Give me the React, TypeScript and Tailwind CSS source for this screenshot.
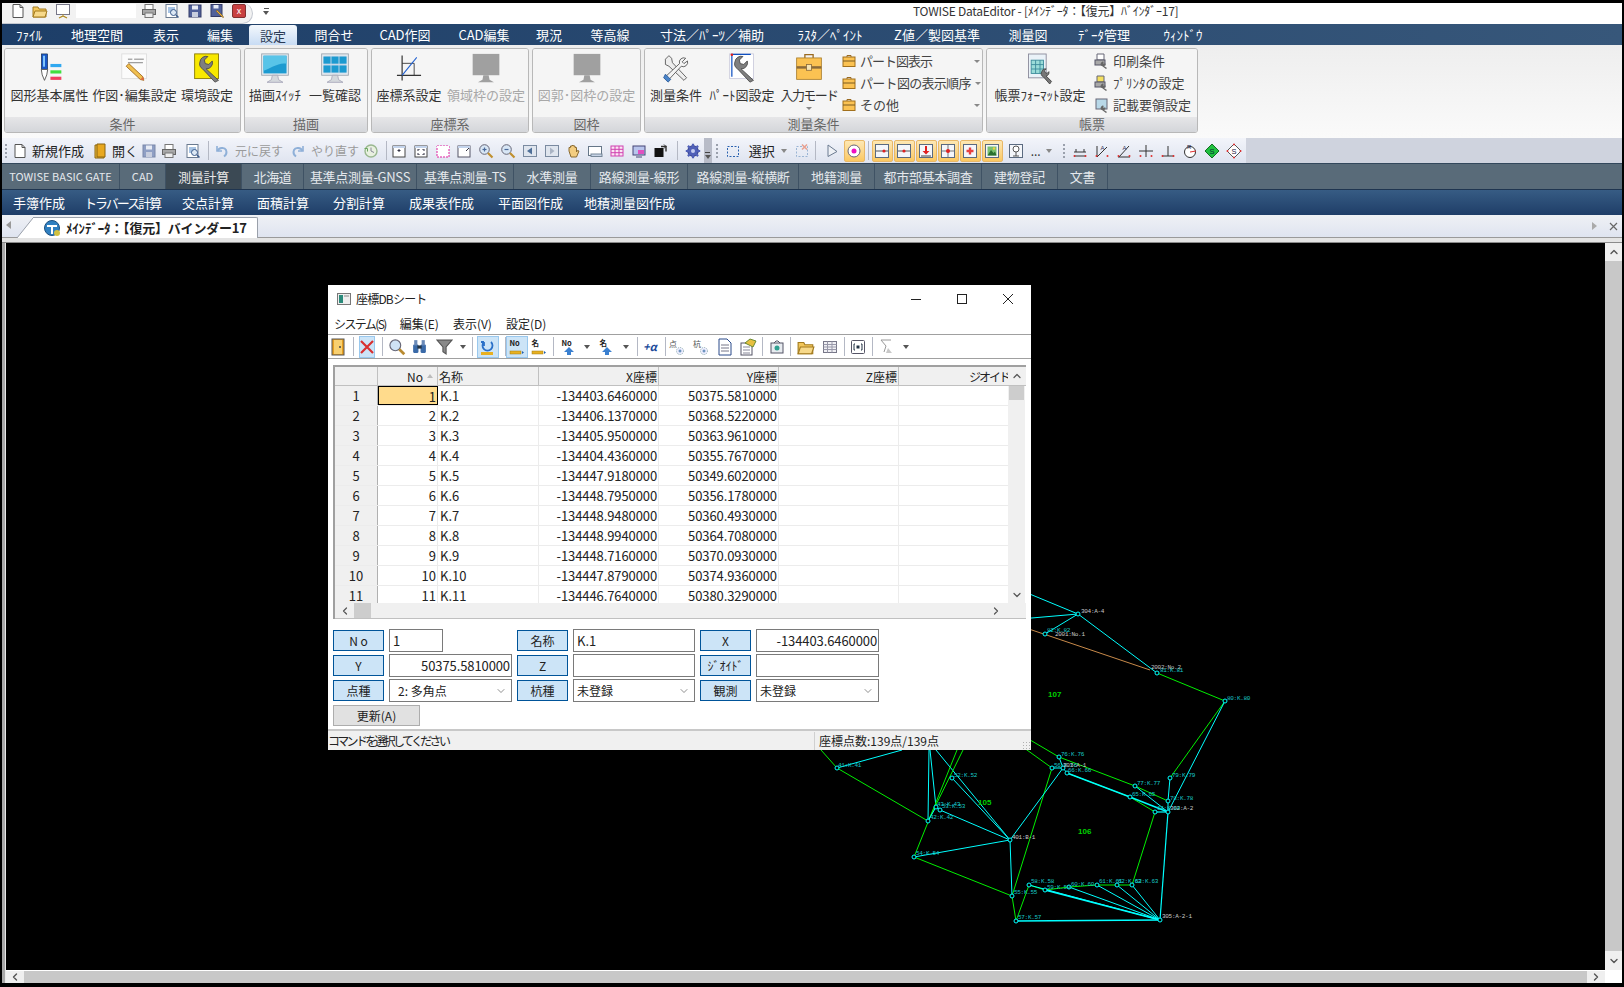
import React from "react";
import { ChevronDown, ChevronLeft, ChevronRight, ChevronUp } from "lucide-react";

const FONT = "font-['Noto_Sans_CJK_JP','Liberation_Sans',sans-serif]";

const Svg: React.FC<{ s?: number; children: React.ReactNode }> = ({ s = 16, children }) => (
  <svg width={s} height={s} viewBox="0 0 16 16" fill="none" className="shrink-0">
    {children}
  </svg>
);

const Sep = ({ c = "ml-[4px]" }: { c?: string }) => <div className={`w-px h-[19px] bg-[#b4b8c4] shrink-0 ${c}`} />;

const Tri = ({ c = "" }: { c?: string }) => (
  <div className={`w-0 h-0 border-x-[3px] border-x-transparent border-t-[4px] border-t-[#555] shrink-0 ${c}`} />
);

// ---- small tool icons ----
const IcPage = () => (
  <Svg>
    <path d="M3 1.5h7l3 3v10H3z" fill="#fff" stroke="#555" />
    <path d="M10 1.5v3h3" stroke="#555" />
  </Svg>
);
const IcOpenBook = () => (
  <Svg>
    <path d="M3 2h9v13H3z" fill="#f0c040" stroke="#8a6510" />
    <path d="M5 1h8v13H5z" fill="#e8a820" stroke="#8a6510" />
  </Svg>
);
const IcFolder = () => (
  <Svg>
    <path d="M1 4h5l1 2h7v8H1z" fill="#f2c65a" stroke="#a37b1f" />
    <path d="M1 14l2-6h12l-2 6z" fill="#f7d98a" stroke="#a37b1f" />
  </Svg>
);
const IcSave = ({ dim = false }: { dim?: boolean }) => (
  <Svg>
    <rect x="2" y="2" width="12" height="12" fill={dim ? "#8f9fc4" : "#50609a"} stroke={dim ? "#7a88aa" : "#333a66"} />
    <rect x="5" y="2.5" width="6" height="4" fill="#e8ecf5" />
    <rect x="5" y="9" width="6" height="5" fill="#c8cede" />
  </Svg>
);
const IcPrint = () => (
  <Svg>
    <rect x="4" y="1.5" width="8" height="5" fill="#fff" stroke="#777" />
    <rect x="1.5" y="6.5" width="13" height="5" fill="#a8a8a8" stroke="#666" />
    <rect x="4" y="10" width="8" height="4.5" fill="#eee" stroke="#777" />
  </Svg>
);
const IcPreview = () => (
  <Svg>
    <rect x="2" y="1.5" width="11" height="13" fill="#fff" stroke="#6a7a90" />
    <rect x="4" y="4" width="7" height="6" fill="#a8c4e4" />
    <circle cx="9.5" cy="9.5" r="3" fill="#dce8f5" stroke="#3a5a8a" />
    <path d="M12 12l2.5 2.5" stroke="#3a5a8a" strokeWidth="1.5" />
  </Svg>
);
const IcSaveEdit = () => (
  <Svg>
    <rect x="2" y="1.5" width="11" height="12" fill="#50609a" stroke="#333a66" />
    <rect x="4.500" y="2" width="5" height="3.500" fill="#e8ecf5" />
    <path d="M7 8l6 6 1.500.5-.5-1.500-6-6z" fill="#e8b040" stroke="#7a5a20" strokeWidth="0.600" />
  </Svg>
);
const IcUndo = ({ flip = false }: { flip?: boolean }) => (
  <Svg>
    <g transform={flip ? "translate(16 0) scale(-1 1)" : undefined}>
      <path d="M3 3v5h5" stroke="#8fb0d8" strokeWidth="1.6" />
      <path d="M3.5 8C5 4.5 10.500 4 12 7c1 2.500 0 5-2 6.500" stroke="#8fb0d8" strokeWidth="2" />
    </g>
  </Svg>
);
const IcClock = () => (
  <Svg>
    <circle cx="8" cy="8" r="6" fill="#e8f0e0" stroke="#9ab890" strokeWidth="1.4" />
    <path d="M8 4.500V8l3 1.500" stroke="#889" />
    <path d="M1.500 5.500h3v3" stroke="#6aa860" />
  </Svg>
);
const IcFrame = ({ c = "#444", dash = false, mark = "" }: { c?: string; dash?: boolean; mark?: string }) => (
  <Svg>
    <rect x="2" y="3" width="12" height="11" fill="#fff" stroke={c} strokeDasharray={dash ? "2 1" : undefined} />
    <rect x="2" y="3" width="12" height="2" fill={dash ? "#fff" : "#c4d4ec"} />
    {mark && <path d={mark} stroke="#334" />}
  </Svg>
);
const IcZoom = ({ minus = false }: { minus?: boolean }) => (
  <Svg>
    <circle cx="6.500" cy="6.500" r="4.800" fill="#d8e6f5" stroke="#667" />
    <path d="M4.500 6.500h4" stroke="#4a6a9a" strokeWidth="1.2" />
    {!minus && <path d="M6.500 4.500v4" stroke="#4a6a9a" strokeWidth="1.2" />}
    <path d="M10 10l4.500 4.500" stroke="#c09030" strokeWidth="2.200" />
  </Svg>
);
const IcArrowBox = ({ right = false }: { right?: boolean }) => (
  <Svg>
    <rect x="1.500" y="2.500" width="13" height="11" fill="#dfe5ee" stroke="#7a8aa0" />
    <path d={right ? "M10.500 8L6 4.500v7z" : "M5 8l5-3.500v7z"} fill={right ? "#aab4c4" : "#4f6f98"} />
  </Svg>
);
const IcHand = () => (
  <Svg>
    <path d="M4 8V4.500h1.500V3H7v-.500h1.500V3H10v1.500h1.500V9l1-1.500L14 8l-2.500 6H6z" fill="#f3cd80" stroke="#8a6a30" />
  </Svg>
);
const IcWin = () => (
  <Svg>
    <rect x="1.500" y="3.500" width="13" height="9" fill="#fff" stroke="#678" />
    <rect x="4" y="11" width="11" height="2.500" fill="#c8d4e6" stroke="#789" />
  </Svg>
);
const IcStand = () => (
  <Svg>
    <rect x="1.500" y="1.500" width="13" height="10" fill="#fff" stroke="#778" />
    <path d="M8 11.500v1.500M4 15l4-2 4 2" stroke="#b08a20" strokeWidth="1.200" />
  </Svg>
);
const IcGridPink = () => (
  <Svg>
    <rect x="2" y="3" width="12" height="10" fill="#fbe6f4" stroke="#d040b0" />
    <path d="M2 6.300h12M2 9.700h12M6 3v10M10 3v10" stroke="#d040b0" />
  </Svg>
);
const IcScreen = () => (
  <Svg>
    <rect x="2" y="3" width="12" height="9" fill="#b8c4ec" stroke="#447" />
    <rect x="7" y="7" width="6" height="4" fill="#e050c0" />
    <path d="M5 14h6" stroke="#447" />
  </Svg>
);
const IcFront = () => (
  <Svg>
    <rect x="1.500" y="5" width="9" height="9" fill="#111" />
    <path d="M8 3.500h5v5" stroke="#333" strokeWidth="1.400" />
    <path d="M11 1.500l2 2-2 2" stroke="#333" />
  </Svg>
);
const IcGear = () => (
  <Svg>
    <circle cx="8" cy="8" r="5.300" fill="#5060b8" stroke="#343f88" />
    <path d="M8 .800v14.400M.800 8h14.400M2.900 2.900l10.200 10.200M13.100 2.900L2.900 13.100" stroke="#5060b8" strokeWidth="2.200" />
    <circle cx="8" cy="8" r="2" fill="#c4ccf0" />
  </Svg>
);
const IcDots = () => (
  <div className="flex flex-col gap-[2px] w-[2px] shrink-0">
    <div className="h-[2px] bg-[#9aa0ac]" />
    <div className="h-[2px] bg-[#9aa0ac]" />
    <div className="h-[2px] bg-[#9aa0ac]" />
    <div className="h-[2px] bg-[#9aa0ac]" />
  </div>
);
const IcSelRect = ({ x = false }: { x?: boolean }) => (
  <Svg>
    <rect x="2.500" y="3.500" width="11" height="10" stroke={x ? "#9ab4d4" : "#2a62b0"} strokeDasharray="2 1.500" />
    {x && <path d="M8 1.500l5 5M13 1.500l-5 5" stroke="#e8a090" strokeWidth="1.500" />}
  </Svg>
);
const IcPointer = () => (
  <Svg>
    <path d="M4 2l9 6.500-9 5z" fill="#eef1f6" stroke="#6a7a90" />
  </Svg>
);
const PtIcon = ({ kind }: { kind: string }) => (
  <Svg>
    <rect x="1.500" y="1.500" width="13" height="13" fill="#f4f6fa" stroke="#5a6a80" />
    {kind === "a" && <><path d="M2 8h12" stroke="#555" /><circle cx="10" cy="8" r="1.600" fill="#e02020" /></>}
    {kind === "b" && <><path d="M2 8h12" stroke="#555" /><circle cx="8" cy="8" r="1.600" fill="#e02020" /></>}
    {kind === "c" && <><path d="M8 3v7" stroke="#e02020" strokeWidth="2" /><path d="M4.500 8L8 11.500 11.500 8z" fill="#e02020" /><path d="M3 13h10" stroke="#444" /></>}
    {kind === "d" && <><path d="M8 2v12M2 8h12" stroke="#777" /><circle cx="8" cy="8" r="2" fill="#e02020" /></>}
    {kind === "e" && <path d="M8 4.500v7M4.500 8h7" stroke="#e84040" strokeWidth="2.400" />}
    {kind === "f" && <><rect x="3.500" y="3.500" width="9" height="9" fill="#7ac070" /><path d="M3.500 12.500L7 7l2.500 3 1.500-1.500 1.500 4z" fill="#2a7030" /><circle cx="10" cy="5.500" r="1.200" fill="#f0d040" /></>}
    {kind === "g" && <><circle cx="8" cy="6" r="3" fill="#fff" stroke="#555" /><path d="M8 9v4M5 13h6" stroke="#555" /></>}
  </Svg>
);
const DimIcon = ({ d, label }: { d: string; label?: string }) => (
  <Svg>
    <path d={d} stroke="#333" />
    {label && <text x="6.500" y="6.500" fontSize="6" fill="#335" fontFamily="Liberation Sans">{label}</text>}
    <circle cx="2.500" cy="13" r="1" fill="#e03030" />
    <circle cx="13.500" cy="13" r="1" fill="#e03030" />
  </Svg>
);
const IcDiamond = ({ green = false }: { green?: boolean }) => (
  <Svg>
    <path d="M8 1l7 7-7 7-7-7z" fill={green ? "#20c040" : "#fff"} stroke={green ? "#107020" : "#555"} />
    <text x="5.500" y="10.500" fontSize="7.500" fill={green ? "#033" : "#224"} fontFamily="Liberation Sans">S</text>
    {!green && <><circle cx="8" cy="1.500" r="1" fill="#e03030" /><circle cx="8" cy="14.500" r="1" fill="#e03030" /><circle cx="1.500" cy="8" r="1" fill="#e03030" /><circle cx="14.500" cy="8" r="1" fill="#e03030" /></>}
  </Svg>
);

// ---- ribbon icons ----
const RbPen = () => (
  <svg width="31" height="31" viewBox="0 0 34 34">
    <rect x="8" y="1" width="7" height="17" fill="#1858c8" stroke="#123" strokeWidth="0.600" />
    <rect x="10" y="3" width="2" height="12" fill="#8cd0ff" />
    <path d="M8 18h7l-1 6-2.500 6-2.500-6z" fill="#fff" stroke="#555" />
    <rect x="18" y="12" width="12" height="3.500" fill="#30a8f0" />
    <rect x="18" y="19" width="12" height="3.500" fill="#40e040" />
    <rect x="18" y="26" width="12" height="3.500" fill="#f04060" />
  </svg>
);
const RbPaper = () => (
  <svg width="30" height="30" viewBox="0 0 34 34">
    <rect x="2" y="1" width="28" height="28" fill="#fbfbfb" stroke="#ddd" />
    <path d="M9 7h5M16 7h11M9 11h17" stroke="#777" />
    <path d="M7 15l16 15 4 1-1-4L10 12z" fill="#f0c050" stroke="#a06a20" />
    <path d="M23 30l4 1-1-4z" fill="#e06a40" />
  </svg>
);
const RbWrench = ({ bg = "#f8e800", corner = false }: { bg?: string; corner?: boolean }) => (
  <svg width="30" height="30" viewBox="0 0 34 34">
    <rect x="3" y="1" width="27" height="28" fill={bg} stroke={bg === "#fff" ? "#ccd" : "#887800"} />
    {corner && <path d="M5 1.500h22M5.500 1v26" stroke="#1050c0" strokeWidth="1.400" />}
    {corner && <circle cx="5.500" cy="2" r="1.500" fill="#e02020" />}
    <path d="M9 10a7 7 0 0 1 9-6l-4 4 1 4 4 1 4-4a7 7 0 0 1-7 9L30 31l-4 2L12 18a7 7 0 0 1-3-8z" fill="#7f7f7f" stroke="#4a4a4a" />
  </svg>
);
const RbMonitor = ({ grid = false, gray = false }: { grid?: boolean; gray?: boolean }) => (
  <svg width="32" height="32" viewBox="0 0 36 36">
    {gray ? (
      <>
        <rect x="3" y="1" width="30" height="24" fill="#a0a0a0" />
        <path d="M15 25h6l1 5 5 3H9l5-3z" fill="#a0a0a0" />
      </>
    ) : (
      <>
        <rect x="3" y="1" width="30" height="24" fill="#e8edf2" stroke="#9aa4ae" />
        <rect x="5" y="3" width="26" height="20" fill={grid ? "#c8d8e8" : "#1c9ad0"} />
        {!grid && <path d="M5 3h26v9C22 10 12 18 5 20z" fill="#58c4e8" />}
        {grid && (
          <>
            <rect x="5" y="4" width="8" height="8" fill="#1c9ad0" /><rect x="14" y="4" width="8" height="8" fill="#1c9ad0" /><rect x="23" y="4" width="8" height="8" fill="#1c9ad0" />
            <rect x="5" y="14" width="8" height="8" fill="#1c9ad0" /><rect x="14" y="14" width="8" height="8" fill="#1c9ad0" /><rect x="23" y="14" width="8" height="8" fill="#1c9ad0" />
          </>
        )}
        <path d="M15 25h6l1 5 5 3H9l5-3z" fill="#d4d8dc" stroke="#aab" />
      </>
    )}
  </svg>
);
const RbAxis = () => (
  <svg width="28" height="31" viewBox="0 0 32 36" fill="none">
    <path d="M8 3v29M2 26h28" stroke="#333" strokeWidth="1.400" />
    <path d="M8 12h14v14" stroke="#333" />
    <path d="M8 26L25 5" stroke="#2060d0" strokeWidth="1.200" />
  </svg>
);
const RbTools = () => (
  <svg width="30" height="30" viewBox="0 0 34 34" fill="none">
    <path d="M5 7l4-4 3 3 1 5 16 17-3 3-17-16-4-2z" fill="#eee" stroke="#555" />
    <path d="M28 6a5 5 0 0 0-7 6L6 26l3 4 14-15a5 5 0 0 0 7-6l-4 3-2-2z" fill="#f4f4f4" stroke="#555" />
    <path d="M5 24l6 6-3 3-5-5z" fill="#4a84c8" stroke="#2a5a98" />
  </svg>
);
const RbCase = () => (
  <svg width="28" height="28" viewBox="0 0 34 34" fill="none">
    <path d="M12 6V2h10v4" stroke="#9a6a20" strokeWidth="1.600" />
    <rect x="2" y="6" width="30" height="26" fill="#fbc252" stroke="#a87c28" />
    <rect x="2" y="16" width="30" height="3" fill="#8a6a3a" />
    <rect x="14" y="14" width="6" height="7" fill="#f6e4b4" stroke="#8a6a3a" />
  </svg>
);
const RbForm = () => (
  <svg width="30" height="32" viewBox="0 0 34 36" fill="none">
    <rect x="4" y="1" width="20" height="27" fill="#eaf2f8" stroke="#889" />
    <rect x="7" y="8" width="14" height="15" fill="#9adcd8" stroke="#3a8a9a" />
    <path d="M7 13h14M7 18h14M12 8v15M17 8v15" stroke="#3a8a9a" />
    <path d="M19 21a4 4 0 0 1 5-3l-2 2 1 2 2 1 2-2a4 4 0 0 1-3 5l6 6-2 3-7-8a4 4 0 0 1-2-6z" fill="#777" stroke="#444" />
  </svg>
);
const SmCase = () => (
  <svg width="14" height="14" viewBox="0 0 14 14" className="shrink-0" fill="none">
    <path d="M5 3V1.500h4V3" stroke="#9a6a20" />
    <rect x="1" y="3" width="12" height="9.500" fill="#fbc252" stroke="#a2701c" />
    <path d="M1 7h12" stroke="#7a5a20" />
  </svg>
);
const SmPrint = ({ tone = "print" }: { tone?: string }) => (
  <svg width="16" height="16" viewBox="0 0 16 16" className="shrink-0" fill="none">
    {tone === "doc" ? (
      <rect x="3" y="2" width="11" height="10" fill="#b8d8e8" stroke="#667" />
    ) : (
      <path d="M4 1h7v6H4z" fill={tone === "yel" ? "#f4e060" : "#fff"} stroke="#667" />
    )}
    {tone !== "doc" && <rect x="2" y="7" width="10" height="5" fill="#a8a8a8" stroke="#556" />}
    <path d="M8 10a2 2 0 0 1 3-1l-1 1 1 1 1-1a2 2 0 0 1-1 3l3 2-1 1-4-3a2 2 0 0 1-1-3z" fill="#666" />
  </svg>
);

const Large: React.FC<{ w: string; icon: React.ReactNode; label: string; dim?: boolean; more?: boolean; tight?: string }> = ({ w, icon, label, dim, more, tight = "" }) => (
  <div className={`flex flex-col items-center shrink-0 ${w}`}>
    <div className="h-[32px] flex items-start justify-center">{icon}</div>
    <div className={`text-[13px] leading-[19px] whitespace-nowrap ${tight} ${dim ? "text-[#a8a8a8]" : "text-[#333]"}`}>{label}</div>
    {more && <div className="w-0 h-0 mt-[3px] border-x-[3px] border-x-transparent border-t-[3px] border-t-[#888]" />}
  </div>
);

const Small: React.FC<{ icon: React.ReactNode; label: string; arrow?: boolean; w: string; tight?: string }> = ({ icon, label, arrow, w, tight = "" }) => (
  <div className={`flex items-center h-[22px] gap-[4px] ${w}`}>
    {icon}
    <span className={`text-[13px] text-[#444] whitespace-nowrap flex-1 ${tight}`}>{label}</span>
    {arrow && <div className="w-0 h-0 border-x-[3px] border-x-transparent border-t-[3px] border-t-[#888]" />}
  </div>
);

const Group: React.FC<{ w: string; label: string; children: React.ReactNode; dim?: boolean }> = ({ w, label, children, dim }) => (
  <div className={`${w} h-[85px] flex flex-col rounded-[3px] border border-[#b8b8b8] overflow-hidden shrink-0`}>
    <div className="h-[68px] flex bg-[#f5f5f5] pt-[4px]">{children}</div>
    <div className={`flex-1 flex items-center justify-center pb-[2px] text-[13px] leading-none bg-gradient-to-b from-[#e6e6e8] to-[#d4d6da] ${dim ? "text-[#888]" : "text-[#666]"}`}>{label}</div>
  </div>
);

const menu: [string, string][] = [
  ["ﾌｧｲﾙ", "w-[54px]"],
  ["地理空間", "w-[82px]"],
  ["表示", "w-[56px]"],
  ["編集", "w-[52px]"],
  ["設定", "w-[48px] mx-[3px]"],
  ["問合せ", "w-[68px]"],
  ["CAD作図", "w-[74px]"],
  ["CAD編集", "w-[84px]"],
  ["現況", "w-[46px]"],
  ["等高線", "w-[76px]"],
  ["寸法／ﾊﾟｰﾂ／補助", "w-[128px]"],
  ["ﾗｽﾀ／ﾍﾟｲﾝﾄ", "w-[108px]"],
  ["Z値／製図基準", "w-[106px]"],
  ["測量図", "w-[76px]"],
  ["ﾃﾞｰﾀ管理", "w-[76px]"],
  ["ｳｨﾝﾄﾞｳ", "w-[82px]"],
];

const tabs: [string, string][] = [
  ["TOWISE BASIC GATE", "w-[118px]"],
  ["CAD", "w-[46px]"],
  ["測量計算", "w-[76px]"],
  ["北海道", "w-[62px]"],
  ["基準点測量-GNSS", "w-[113px]"],
  ["基準点測量-TS", "w-[97px]"],
  ["水準測量", "w-[77px]"],
  ["路線測量-線形", "w-[97px]"],
  ["路線測量-縦横断", "w-[111px]"],
  ["地籍測量", "w-[76px]"],
  ["都市部基本調査", "w-[107px]"],
  ["建物登記", "w-[76px]"],
  ["文書", "w-[50px]"],
];

const subTabs: [string, string, string][] = [
  ["手簿作成", "w-[71px]", ""],
  ["トラバース計算", "w-[98px]", "tracking-[-2px]"],
  ["交点計算", "w-[75px]", ""],
  ["面積計算", "w-[76px]", ""],
  ["分割計算", "w-[76px]", ""],
  ["成果表作成", "w-[89px]", ""],
  ["平面図作成", "w-[86px]", ""],
  ["地積測量図作成", "w-[100px]", ""],
];

const rows = [
  ["K.1", "-134403.6460000", "50375.5810000"],
  ["K.2", "-134406.1370000", "50368.5220000"],
  ["K.3", "-134405.9500000", "50363.9610000"],
  ["K.4", "-134404.4360000", "50355.7670000"],
  ["K.5", "-134447.9180000", "50349.6020000"],
  ["K.6", "-134448.7950000", "50356.1780000"],
  ["K.7", "-134448.9480000", "50360.4930000"],
  ["K.8", "-134448.9940000", "50364.7080000"],
  ["K.9", "-134448.7160000", "50370.0930000"],
  ["K.10", "-134447.8790000", "50374.9360000"],
  ["K.11", "-134446.7640000", "50380.3290000"],
];

const P: Record<string, [number, number]> = {
  a4: [1078, 614], k82: [1045, 634], k81: [1157, 673], k80: [1225, 701], k79: [1170, 778], k78: [1168, 801], k77: [1135, 786],
  k76: [1059, 757], k56: [1052, 768], a1: [1063, 768], k66: [1067, 773], k65: [1130, 797], k64: [1155, 812], a2: [1168, 812],
  a21: [1160, 920], b1: [1010, 840], k41: [837, 768], k42: [928, 821], k43: [936, 807], k53: [940, 810], k52: [952, 778],
  k54: [914, 857], k55: [1012, 896], k57: [1016, 921], k58: [1029, 885], k59: [1045, 890], k60: [1069, 887], k61: [1097, 885],
  k62: [1117, 885], k63: [1132, 885],
};

const cyanEdges: [string, string, number][] = [
  ["a4", "k82", 1], ["a4", "k81", 1], ["k80", "a2", 1], ["k79", "k78", 1], ["k78", "a2", 1], ["k77", "a2", 1], ["k64", "a2", 1.2],
  ["a2", "a21", 1.2], ["k66", "k65", 1.4], ["k65", "a2", 1.4], ["k76", "a1", 1], ["k56", "a1", 1], ["a1", "k66", 1], ["b1", "a1", 1],
  ["k57", "a21", 1.4], ["k58", "a21", 1], ["k59", "a21", 1.6], ["k60", "a21", 1], ["k61", "a21", 1], ["k62", "a21", 1], ["k63", "a21", 1],
  ["b1", "k55", 1], ["b1", "k54", 1], ["k53", "b1", 1], ["k52", "b1", 1], ["k43", "k53", 1.2], ["k42", "k43", 1],
];
const greenEdges: [string, string][] = [
  ["k81", "k80"], ["k80", "k79"], ["k76", "k77"], ["k77", "k78"], ["k56", "k55"], ["k66", "k65"], ["k65", "k64"], ["k64", "k63"],
  ["k55", "k57"], ["k57", "k58"], ["k58", "k59"], ["k59", "k60"], ["k60", "k61"], ["k61", "k62"], ["k62", "k63"], ["k54", "k55"], ["k41", "k42"],
];

const labels: [string, number, number, string?][] = [
  ["304:A-4", 1081, 613, "#c8c8c8"], ["82:K.82", 1047, 632], ["2001:No.1", 1055, 636, "#c8c8c8"], ["2002:No.2", 1151, 669, "#c8c8c8"], ["81:K.81", 1160, 672],
  ["80:K.80", 1227, 700], ["76:K.76", 1061, 756], ["56:K.56", 1054, 767], ["303:A-1", 1063, 767, "#c8c8c8"], ["66:K.66", 1068, 772], ["77:K.77", 1137, 785],
  ["79:K.79", 1172, 777], ["78:K.78", 1170, 800], ["65:K.65", 1132, 796], ["302:A-2", 1170, 810, "#c8c8c8"], ["64:K.64", 1157, 810], ["41:K.41", 838, 767],
  ["52:K.52", 954, 777], ["43:K.43", 937, 806], ["53:K.53", 942, 808], ["42:K.42", 930, 819], ["54:K.54", 916, 855], ["401:B-1", 1012, 839, "#c8c8c8"],
  ["55:K.55", 1014, 894], ["57:K.57", 1018, 919], ["58:K.58", 1031, 883], ["59:K.59", 1047, 889], ["60:K.60", 1071, 886], ["61:K.61", 1099, 883],
  ["62:K.62", 1118, 883], ["63:K.63", 1135, 883], ["305:A-2-1", 1162, 918, "#c8c8c8"],
];

const CanvasDrawing = () => (
  <svg viewBox="6 243 1599 727" width="1599" height="727" className="block" fill="none">
    <path d="M1020 590L1078 614M1020 619L1078 614M902 750L837 768M929 750L928 821M930 750L936 807M936 750L1010 840" stroke="#00ffff" />
    <path d="M1020 626L1150 670" stroke="#c88a4a" />
    <path d="M1020 734L1059 757M1020 745L1052 768M821 750L837 768M957 750L914 857M963 750L928 821" stroke="#00f000" />
    {greenEdges.map(([a, b], i) => (
      <line key={i} x1={P[a][0]} y1={P[a][1]} x2={P[b][0]} y2={P[b][1]} stroke="#00f000" />
    ))}
    {cyanEdges.map(([a, b, w], i) => (
      <line key={i} x1={P[a][0]} y1={P[a][1]} x2={P[b][0]} y2={P[b][1]} stroke="#00ffff" strokeWidth={w} />
    ))}
    {Object.values(P).map(([x, y], i) => (
      <circle key={i} cx={x} cy={y} r="2" stroke="#00ffff" fill="#000" />
    ))}
    {labels.map(([t, x, y, c]) => (
      <text key={t} x={x} y={y} fontSize="6" letterSpacing="-0.3" fontFamily="Liberation Mono" fill={c ?? "#18c8c8"}>{t}</text>
    ))}
    <text x="1048" y="697" fontSize="8" fontWeight="bold" fontFamily="Liberation Sans" fill="#00d000">107</text>
    <text x="1078" y="834" fontSize="8" fontWeight="bold" fontFamily="Liberation Sans" fill="#00d000">106</text>
    <text x="978" y="805" fontSize="8" fontWeight="bold" fontFamily="Liberation Sans" fill="#00d000">105</text>
  </svg>
);

const FBtn: React.FC<{ w?: string; children: React.ReactNode }> = ({ w = "w-[51px]", children }) => (
  <div className={`${w} h-[21px] shrink-0 flex items-center justify-center bg-[#cce4f7] border border-[#005499] text-[12px] leading-none text-[#222]`}>{children}</div>
);

const FInput: React.FC<{ w: string; right?: boolean; children?: React.ReactNode; select?: boolean; pl?: string }> = ({ w, right, children, select, pl = "pl-[3px]" }) => (
  <div className={`${w} h-[23px] shrink-0 flex items-center bg-white border border-[#7a7a7a] text-[13px] leading-none text-[#222] ${right ? "justify-end pr-[1px] tracking-[-0.1px]" : pl}`}>
    <span className={select ? "flex-1 text-[12px]" : ""}>{children}</span>
    {select && <ChevronDown size={12} strokeWidth={1.200} className="text-[#444] mr-[4px]" />}
  </div>
);

const DT: React.FC<{ w?: string; on?: boolean; c?: string; children: React.ReactNode }> = ({ w = "w-[22px]", on, c = "", children }) => (
  <div className={`${w} h-[22px] shrink-0 flex items-center justify-center ${c} ${on ? "bg-[#cce4f7] border border-[#99c8ee]" : ""}`}>{children}</div>
);

const SortIc = ({ t, bar = true }: { t: string; bar?: boolean }) => (
  <svg width="18" height="18" viewBox="0 0 18 18" className="shrink-0" fill="none">
    <text x="1.500" y="8" fontSize="7.500" fontWeight="bold" fontFamily="Noto Sans CJK JP" fill="#222">{t}</text>
    {bar ? (
      <>
        <rect x="2" y="13" width="11" height="3" fill="#e8b020" stroke="#9a7a10" strokeWidth="0.500" />
        <path d="M14 13l2 1.500-2 1.500z" fill="#2060b0" />
      </>
    ) : (
      <path d="M9 9l5 5h-3v3H7v-3H4z" fill="#3a80d0" />
    )}
  </svg>
);

const Bin = () => (
  <Svg s={17}>
    <rect x="2" y="6" width="5" height="8" rx="1" fill="#3a6aa8" />
    <rect x="9" y="6" width="5" height="8" rx="1" fill="#3a6aa8" />
    <rect x="3" y="2" width="3" height="5" fill="#6a8ab8" />
    <rect x="10" y="2" width="3" height="5" fill="#6a8ab8" />
    <rect x="6" y="7" width="4" height="3" fill="#234" />
  </Svg>
);

const Funnel = () => (
  <Svg s={17}>
    <path d="M1 2h14L9.500 8.500V15l-3-2V8.500z" fill="#8a8a8a" stroke="#555" />
  </Svg>
);

const PtAdd = ({ t }: { t: string }) => (
  <svg width="18" height="18" viewBox="0 0 18 18" className="shrink-0" fill="none">
    <text x="1" y="9" fontSize="8" fontFamily="Noto Sans CJK JP" fill="#555">{t}</text>
    <circle cx="12" cy="13" r="3.500" fill="#eef" stroke="#8aa" strokeDasharray="1 1" />
    <path d="M10.500 13h3M12 11.500v3" stroke="#47a" />
  </svg>
);

function IcZoomPlain() {
  return (
    <Svg s={18}>
      <circle cx="6.500" cy="6.500" r="4.800" fill="#cfe2f5" stroke="#667" />
      <path d="M10 10l4.500 4.500" stroke="#b88a30" strokeWidth="2.400" />
    </Svg>
  );
}

const DialogToolbar = () => (
  <div className="h-[24px] flex items-center border-b border-[#a0a0a0]">
    <DT w="w-[20px]">
      <svg width="14" height="18" viewBox="0 0 14 18">
        <rect x="1" y="1" width="12" height="16" fill="#e8a020" stroke="#555" />
        <rect x="3" y="2" width="8" height="14" fill="#f8d070" />
        <circle cx="9" cy="9" r="1" fill="#444" />
      </svg>
    </DT>
    <Sep c="ml-[5px]" />
    <DT w="w-[16px]" c="ml-[5px]" on>
      <svg width="14" height="14" viewBox="0 0 14 14"><path d="M1 1l12 12M13 1L1 13" stroke="#d83030" strokeWidth="2.200" /></svg>
    </DT>
    <Sep c="ml-[7px]" />
    <DT c="ml-[3px]"><IcZoomPlain /></DT>
    <DT><Bin /></DT>
    <DT c="ml-[3px]"><Funnel /></DT>
    <Tri c="ml-[5px] border-t-[#222]" />
    <Sep c="ml-[6px]" />
    <DT c="ml-[4px]" on>
      <svg width="18" height="18" viewBox="0 0 18 18" fill="none">
        <path d="M5 4a5 5 0 1 0 7 0M5 4v4M5 4H2" stroke="#2a70c8" strokeWidth="1.800" />
        <rect x="2" y="14" width="12" height="3" fill="#e8b020" />
      </svg>
    </DT>
    <Sep c="ml-[6px]" />
    <DT on><SortIc t="No" /></DT>
    <DT><SortIc t="名" /></DT>
    <Sep c="ml-[3px]" />
    <DT c="ml-[4px]"><SortIc t="No" bar={false} /></DT>
    <Tri c="ml-[4px] border-t-[#222]" />
    <DT c="ml-[6px]"><SortIc t="名" bar={false} /></DT>
    <Tri c="ml-[5px] border-t-[#222]" />
    <Sep c="ml-[8px]" />
    <DT c="ml-[1px]"><span className="text-[11px] font-bold italic text-[#1a4a9a] leading-none">+α</span></DT>
    <Sep c="ml-[4px]" />
    <DT><PtAdd t="点" /></DT>
    <DT c="ml-[2px]"><PtAdd t="杭" /></DT>
    <DT c="ml-[2px]">
      <svg width="14" height="18" viewBox="0 0 14 18" fill="none">
        <path d="M1 1h8l4 4v12H1z" fill="#fff" stroke="#2a4a8a" />
        <path d="M3 7h8M3 10h8M3 13h8" stroke="#778" />
      </svg>
    </DT>
    <DT c="ml-[1px]">
      <svg width="18" height="18" viewBox="0 0 18 18" fill="none">
        <rect x="2" y="5" width="11" height="12" fill="#fff" stroke="#556" />
        <path d="M4 9h7M4 12h7M4 15h7" stroke="#889" />
        <path d="M6 5l5-4 6 2-3 6z" fill="#e8c040" stroke="#6a8a30" />
      </svg>
    </DT>
    <Sep c="ml-[3px]" />
    <DT c="ml-[3px]">
      <Svg>
        <rect x="2" y="4" width="12" height="10" fill="#e8ecf0" stroke="#556" />
        <circle cx="8" cy="9" r="2.500" fill="#30a090" />
        <path d="M5 4l2-2h2l2 2" stroke="#556" />
      </Svg>
    </DT>
    <Sep c="ml-[2px]" />
    <DT c="ml-[4px]"><Svg s={18}><path d="M1 4h5l1 2h7v8H1z" fill="#f2c65a" stroke="#a37b1f" /><path d="M1 14l2-6h12l-2 6z" fill="#f7d98a" stroke="#a37b1f" /></Svg></DT>
    <DT c="ml-[2px]">
      <Svg>
        <rect x="1.500" y="2.500" width="13" height="11" fill="#f0f0f4" stroke="#778" />
        <path d="M1.500 5.500h13M1.500 8h13M1.500 10.500h13M5.500 2.500v11M10 2.500v11" stroke="#99a" />
      </Svg>
    </DT>
    <Sep c="ml-[3px]" />
    <DT c="ml-[2px]">
      <Svg>
        <rect x="1.500" y="1.500" width="13" height="13" rx="1" fill="#fff" stroke="#556" />
        <path d="M5 5H4v6h1M11 5h1v6h-1" stroke="#234" />
        <rect x="6.500" y="6.500" width="3" height="3" fill="#234" />
      </Svg>
    </DT>
    <Sep c="ml-[3px]" />
    <DT c="ml-[3px]">
      <svg width="14" height="16" viewBox="0 0 14 16" fill="none">
        <path d="M1 1h10M1 1l5 6-2 6" stroke="#999" />
        <path d="M8 9l4 5H6z" fill="#c8c8c8" />
      </svg>
    </DT>
    <Tri c="ml-[5px] border-t-[#222]" />
  </div>
);

const Dialog = () => (
  <div className={`absolute left-[328px] top-[285px] w-[703px] h-[465px] bg-white flex flex-col ${FONT}`}>
    <div className="h-[28px] flex items-center pl-[9px] shrink-0">
      <svg width="14" height="14" viewBox="0 0 14 14" className="shrink-0">
        <rect x="0.500" y="1.500" width="13" height="11" fill="#eee" stroke="#777" />
        <rect x="2" y="3" width="4" height="8" fill="#2a8a7a" />
        <rect x="7" y="3" width="5" height="2" fill="#bbb" />
      </svg>
      <span className="ml-[5px] text-[12px] text-[#222] tracking-[-0.8px]">座標DBシート</span>
      <div className="flex-1" />
      <div className="w-[46px] flex justify-center"><div className="w-[10px] h-px bg-[#222]" /></div>
      <div className="w-[46px] flex justify-center"><div className="w-[10px] h-[10px] border border-[#222]" /></div>
      <div className="w-[46px] flex justify-center">
        <svg width="12" height="12" viewBox="0 0 12 12"><path d="M1 1l10 10M11 1L1 11" stroke="#222" /></svg>
      </div>
    </div>
    <div className="h-[22px] flex items-center pl-[6px] gap-[14px] text-[12px] text-[#222] shrink-0 border-b border-[#a0a0a0]">
      <span className="tracking-[-1.600px]">システム(S)</span>
      <span>編集(E)</span>
      <span>表示(V)</span>
      <span>設定(D)</span>
    </div>
    <DialogToolbar />
    {/* grid */}
    <div className="mx-[5px] mt-[6px] h-[254px] shrink-0 flex flex-col border-t-2 border-l-2 border-[#a0a0a0] relative">
      <div className="flex h-[19px] shrink-0 text-[12px] leading-[19px] text-[#222] bg-[#f0f0f0] border-b border-[#c0c0c0]">
        <div className="w-[43px] border-r border-[#c0c0c0]" />
        <div className="w-[60px] border-r border-[#c0c0c0] flex items-center justify-end pr-[4px]">
          <span>No</span>
          <div className="ml-[4px] w-0 h-0 border-x-[3px] border-x-transparent border-b-[4px] border-b-[#bbb]" />
        </div>
        <div className="w-[101px] border-r border-[#c0c0c0] pl-[1px]">名称</div>
        <div className="w-[120px] border-r border-[#c0c0c0] text-right pr-[1px]">X座標</div>
        <div className="w-[120px] border-r border-[#c0c0c0] text-right pr-[1px]">Y座標</div>
        <div className="w-[120px] border-r border-[#c0c0c0] text-right pr-[1px]">Z座標</div>
        <div className="w-[109px] pl-[70px] whitespace-nowrap overflow-hidden tracking-[-2px]">ジオイド高</div>
        <div className="w-[17px] bg-[#f0f0f0] flex items-center justify-center"><ChevronUp size={12} strokeWidth={2.400} className="text-[#555]" /></div>
      </div>
      <div className="flex h-[217px] overflow-hidden">
        <div className="w-[673px] shrink-0 overflow-hidden">
          {rows.map(([name, x, y], i) => (
            <div key={name} className="flex h-[20px] shrink-0 text-[13px] leading-[19px] text-[#222] border-b border-[#ececec]">
              <div className="w-[43px] bg-[#f0f0f0] border-r border-[#b0b0b0] text-center">{i + 1}</div>
              <div className={`w-[60px] border-r text-right pr-[1px] ${i === 0 ? "bg-[#ffdb8c] border border-black" : "border-[#ececec]"}`}>{i + 1}</div>
              <div className="w-[101px] border-r border-[#ececec] pl-[2px]">{name}</div>
              <div className="w-[120px] border-r border-[#ececec] text-right pr-[1px] tracking-[-0.1px]">{x}</div>
              <div className="w-[120px] border-r border-[#ececec] text-right pr-[1px] tracking-[-0.1px]">{y}</div>
              <div className="w-[120px] border-r border-[#ececec]" />
              <div className="w-[109px]" />
            </div>
          ))}
        </div>
        <div className="w-[17px] bg-[#f0f0f0] flex flex-col">
          <div className="h-[14px] mx-[1px] bg-[#cdcdcd]" />
          <div className="flex-1" />
          <ChevronDown size={12} strokeWidth={2.400} className="text-[#555] mx-auto mb-[2px]" />
        </div>
      </div>
      <div className="h-[16px] flex items-center bg-[#f0f0f0] border-b border-[#c0c0c0] shrink-0">
        <ChevronLeft size={12} strokeWidth={2.400} className="text-[#555] ml-[4px]" />
        <div className="w-[17px] h-[15px] bg-[#cdcdcd] ml-[3px]" />
        <div className="flex-1" />
        <ChevronRight size={12} strokeWidth={2.400} className="text-[#555] mr-[24px]" />
      </div>
    </div>
    {/* form */}
    <div className="ml-[5px] mt-[10px] flex flex-col gap-[2px] shrink-0">
      <div className="flex items-center h-[23px] gap-[5px]">
        <FBtn>N o</FBtn>
        <FInput w="w-[54px]">1</FInput>
        <div className="w-[64px] shrink-0" />
        <FBtn>名称</FBtn>
        <FInput w="w-[122px]">K.1</FInput>
        <FBtn>X</FBtn>
        <FInput w="w-[123px]" right>-134403.6460000</FInput>
      </div>
      <div className="flex items-center h-[23px] gap-[5px]">
        <FBtn>Y</FBtn>
        <FInput w="w-[123px]" right>50375.5810000</FInput>
        <FBtn>Z</FBtn>
        <FInput w="w-[122px]" />
        <FBtn>ｼﾞｵｲﾄﾞ</FBtn>
        <FInput w="w-[123px]" />
      </div>
      <div className="flex items-center h-[23px] gap-[5px]">
        <FBtn>点種</FBtn>
        <FInput w="w-[123px]" select pl="pl-[8px]">2: 多角点</FInput>
        <FBtn>杭種</FBtn>
        <FInput w="w-[122px]" select>未登録</FInput>
        <FBtn>観測</FBtn>
        <FInput w="w-[123px]" select>未登録</FInput>
      </div>
      <div className="w-[87px] h-[21px] mt-[1px] flex items-center justify-center bg-[#e1e1e1] border border-[#adadad] text-[12px] leading-none text-[#222]">更新(A)</div>
    </div>
    <div className="flex-1" />
    <div className="h-[21px] shrink-0 flex items-center border-t-2 border-[#c8c8c8] bg-[#f0f0f0] text-[12px] text-[#222] relative">
      <div className="w-[486px] whitespace-nowrap tracking-[-2.700px]">コマンドを選択してください</div>
      <div className="pl-[4px] border-l border-[#d0d0d0]">座標点数:139点/139点</div>
      <div className="absolute right-[1px] bottom-[1px] w-[8px] h-[8px] bg-[radial-gradient(#b0b0b0_1px,transparent_1px)] bg-[length:3px_3px]" />
    </div>
  </div>
);

const T: React.FC<{ children: React.ReactNode }> = ({ children }) => (
  <div className="w-[18px] h-[18px] shrink-0 flex items-center justify-center">{children}</div>
);

const Hot: React.FC<{ children: React.ReactNode }> = ({ children }) => (
  <div className="w-[21px] h-[22px] mr-[1px] shrink-0 flex items-center justify-center rounded-[2px] bg-gradient-to-b from-[#fde8b4] to-[#fbc860] border border-[#e8b868]">{children}</div>
);

export default function App() {
  return (
    <div className={`relative w-[1624px] h-[987px] bg-black overflow-hidden ${FONT}`}>
      <div className="h-[3px]" />
      <div className="ml-[2px] mr-[2px] flex flex-col">
        {/* title bar */}
        <div className="h-[21px] bg-white flex items-center relative">
          <div className="w-[251px] h-[21px] flex items-center bg-[#f2f2f2] border-b border-r border-[#c4c8d0] rounded-br-[12px] rounded-tr-[12px] shrink-0 pl-[6px] pb-[5px]">
            <div className="w-[20px] flex justify-center"><IcPage /></div>
            <div className="w-[24px] flex justify-center"><IcFolder /></div>
            <div className="w-[22px] flex justify-center"><IcStand /></div>
            <div className="w-[60px] h-[14px] bg-white ml-[2px] mr-[2px]" />
            <div className="w-[22px] flex justify-center"><IcPrint /></div>
            <div className="w-[24px] flex justify-center"><IcPreview /></div>
            <div className="w-[22px] flex justify-center"><IcSave /></div>
            <div className="w-[22px] flex justify-center"><IcSaveEdit /></div>
            <div className="w-[22px] flex justify-center">
              <div className="w-[14px] h-[14px] bg-[#c84040] border border-[#803030] rounded-[2px] text-white text-[9px] leading-[12px] text-center">x</div>
            </div>
          </div>
          <div className="ml-[10px] pb-[5px] flex flex-col items-center gap-[2px]">
            <div className="w-[5px] h-px bg-[#555]" />
            <Tri />
          </div>
          <div className="absolute left-[911px] top-0 h-full pb-[5px] flex items-center text-[12px] text-[#333] whitespace-nowrap tracking-[-0.25px]">
            TOWISE DataEditor - [ﾒｲﾝﾃﾞｰﾀ：【復元】ﾊﾞｲﾝﾀﾞｰ17]
          </div>
        </div>
        {/* menu */}
        <div className="h-[21px] flex items-stretch bg-gradient-to-r from-[#1d3e68] to-[#37577a]">
          {menu.map(([m, w]) => (
            <div
              key={m}
              className={`${w} shrink-0 flex items-center justify-center text-[13px] leading-none whitespace-nowrap ${m === "設定" ? "bg-gradient-to-b from-[#f4f8fc] to-[#c8dcf4] rounded-t-[3px] text-[#2a3a55] mt-px" : "text-white"}`}
            >
              {m}
            </div>
          ))}
        </div>
        {/* ribbon */}
        <div className="h-[93px] bg-gradient-to-b from-[#eeeeee] to-[#fafafa] flex items-start gap-[3px] pl-[2px] pt-[3px]">
          <Group w="w-[237px]" label="条件">
            <Large w="w-[85px] pl-[4px]" icon={<RbPen />} label="図形基本属性" />
            <Large w="w-[89px]" icon={<RbPaper />} label="作図･編集設定" />
            <Large w="w-[56px]" icon={<RbWrench />} label="環境設定" />
          </Group>
          <Group w="w-[124px]" label="描画">
            <Large w="w-[60px]" icon={<RbMonitor />} label="描画ｽｲｯﾁ" />
            <Large w="w-[60px]" icon={<RbMonitor grid />} label="一覧確認" />
          </Group>
          <Group w="w-[158px]" label="座標系">
            <Large w="w-[74px]" icon={<RbAxis />} label="座標系設定" />
            <Large w="w-[80px]" icon={<RbMonitor gray />} label="領域枠の設定" dim />
          </Group>
          <Group w="w-[109px]" label="図枠">
            <Large w="w-[107px]" icon={<RbMonitor gray />} label="図郭･図枠の設定" dim />
          </Group>
          <Group w="w-[339px]" label="測量条件">
            <Large w="w-[62px]" icon={<RbTools />} label="測量条件" />
            <Large w="w-[70px]" icon={<RbWrench bg="#fff" corner />} label="ﾊﾟｰﾄ図設定" />
            <Large w="w-[64px]" icon={<RbCase />} label="入力モード" more tight="tracking-[-1.600px]" />
            <div className="flex flex-col pl-[1px] -mt-[3px]">
              <Small w="w-[138px]" icon={<SmCase />} label="パート図表示" arrow tight="tracking-[-1px]" />
              <Small w="w-[138px]" icon={<SmCase />} label="パート図の表示順序" arrow tight="tracking-[-0.700px]" />
              <Small w="w-[138px]" icon={<SmCase />} label="その他" arrow />
            </div>
          </Group>
          <Group w="w-[212px]" label="帳票">
            <Large w="w-[106px]" icon={<RbForm />} label="帳票ﾌｫｰﾏｯﾄ設定" />
            <div className="flex flex-col -mt-[3px]">
              <Small w="w-[100px]" icon={<SmPrint />} label="印刷条件" />
              <Small w="w-[100px]" icon={<SmPrint tone="yel" />} label="ﾌﾟﾘﾝﾀの設定" />
              <Small w="w-[100px]" icon={<SmPrint tone="doc" />} label="記載要領設定" />
            </div>
          </Group>
        </div>
        {/* main toolbar */}
        <div className="h-[25px] bg-[#cfd3de] flex">
          <div className="w-[1244px] h-full bg-gradient-to-b from-[#f2f4fa] to-[#dfe4f0] flex items-center pl-[3px] text-[13px] leading-none">
            <IcDots />
            <div className="ml-[4px]"><T><IcPage /></T></div>
            <span className="ml-[3px] text-[#222]">新規作成</span>
            <div className="ml-[7px]"><T><IcOpenBook /></T></div>
            <span className="ml-[3px] text-[#222]">開く</span>
            <div className="ml-[2px]"><T><IcSave dim /></T></div>
            <div className="ml-[2px]"><T><IcPrint /></T></div>
            <div className="ml-[6px]"><T><IcPreview /></T></div>
            <Sep c="ml-[6px]" />
            <div className="ml-[4px]"><T><IcUndo /></T></div>
            <span className="ml-[4px] text-[#9a9a9a] text-[12px]">元に戻す</span>
            <div className="ml-[6px]"><T><IcUndo flip /></T></div>
            <span className="ml-[4px] text-[#9a9a9a] text-[12px]">やり直す</span>
            <div className="ml-[3px]"><T><IcClock /></T></div>
            <Sep c="ml-[6px]" />
            <div className="ml-[3px] flex gap-[3.800px] items-center">
              <T><IcFrame mark="M8 6v3M6.500 7.500h3" /></T>
              <T><IcFrame mark="M4 7h2v-1M12 7h-2v-1M4 11h2v1M12 11h-2v1" /></T>
              <T><IcFrame c="#e020a0" dash /></T>
              <T><IcFrame c="#556" mark="M10 8l3-3" /></T>
              <T><IcZoom /></T>
              <T><IcZoom minus /></T>
              <T><IcArrowBox /></T>
              <T><IcArrowBox right /></T>
              <T><IcHand /></T>
              <T><IcWin /></T>
              <T><IcGridPink /></T>
              <T><IcScreen /></T>
              <T><IcFront /></T>
            </div>
            <Sep c="ml-[7px]" />
            <div className="ml-[6px]"><T><IcGear /></T></div>
            <div className="ml-[2px] w-[8px] h-[25px] bg-[#b8bcc8] flex flex-col justify-end items-center pb-[4px] gap-[2px]">
              <div className="w-[5px] h-px bg-[#444]" />
              <Tri />
            </div>
            <div className="ml-[4px]"><IcDots /></div>
            <div className="ml-[6px]"><T><IcSelRect /></T></div>
            <span className="ml-[7px] text-[#222]">選択</span>
            <Tri c="ml-[6px] border-t-[#888]" />
            <div className="ml-[6px]"><T><IcSelRect x /></T></div>
            <Sep c="ml-[4px]" />
            <div className="ml-[7px]"><T><IcPointer /></T></div>
            <div className="ml-[3px]">
              <Hot>
                <Svg>
                  <circle cx="8" cy="8" r="6" fill="#fff" stroke="#667" />
                  <circle cx="8" cy="8" r="2.500" fill="#f010c0" />
                </Svg>
              </Hot>
            </div>
            <Sep c="ml-[2px]" />
            <div className="ml-[3px] flex">
              <Hot><PtIcon kind="a" /></Hot>
              <Hot><PtIcon kind="b" /></Hot>
              <Hot><PtIcon kind="c" /></Hot>
              <Hot><PtIcon kind="d" /></Hot>
              <Hot><PtIcon kind="e" /></Hot>
              <Hot><PtIcon kind="f" /></Hot>
            </div>
            <div className="ml-[3px]"><T><PtIcon kind="g" /></T></div>
            <span className="ml-[6px] text-[#333] text-[12px]">...</span>
            <Tri c="ml-[5px] border-t-[#888]" />
            <div className="ml-[11px]"><IcDots /></div>
            <div className="ml-[6px] flex gap-[4px] items-center">
              <T><DimIcon d="M2 13h12M2 9h12M4 6v3M12 6v3" /></T>
              <T><DimIcon d="M3 14V3M3 14L13 4" label="A" /></T>
              <T><DimIcon d="M2 14h12M3 14L13 3" label="A" /></T>
              <T><DimIcon d="M8 2v12M1 8h14" /></T>
              <T><DimIcon d="M8 3v10M2 13h12" /></T>
              <T><Svg><circle cx="8" cy="9" r="5.500" fill="#fff" stroke="#333" /><path d="M8 9l6-1" stroke="#e03030" /><text x="5" y="6" fontSize="6" fontFamily="Liberation Sans" fill="#224">R</text></Svg></T>
              <T><IcDiamond green /></T>
              <T><IcDiamond /></T>
            </div>
          </div>
        </div>
        {/* gate tabs */}
        <div className="h-[26px] flex bg-[#596b79] border-t border-[#33485c]">
          {tabs.map(([t, w]) => (
            <div
              key={t}
              className={`${w} shrink-0 flex items-center justify-center whitespace-nowrap leading-none border-r border-[#3f5264] ${t === "TOWISE BASIC GATE" || t === "CAD" ? "text-[11px]" : "text-[13px] tracking-[-0.3px]"} ${t === "測量計算" ? "bg-[#3b4954] text-[#e8e8e8]" : "text-[#e4e8ec]"}`}
            >
              {t}
            </div>
          ))}
        </div>
        <div className="h-[26px] flex items-center pl-[11px] bg-gradient-to-b from-[#375c84] to-[#1f3e68] border-t border-[#1f3550] text-[13px] leading-none text-white">
          {subTabs.map(([t, w, tr]) => (
            <div key={t} className={`${w} ${tr} shrink-0 whitespace-nowrap`}>{t}</div>
          ))}
        </div>
        {/* document tab strip */}
        <div className="h-[23px] bg-gradient-to-b from-[#eff1f5] to-[#dfe4f0] flex items-end relative border-b border-[#9a9a9a]">
          <div className="absolute left-[4px] top-[6px] w-0 h-0 border-y-[4px] border-y-transparent border-r-[5px] border-r-[#999]" />
          <svg width="16" height="21" viewBox="0 0 16 21" className="ml-[15px] -mb-px shrink-0">
            <path d="M0 21L16 1V21z" fill="#fff" />
            <path d="M0 21L16 1" stroke="#9aa0aa" fill="none" />
          </svg>
          <div className="w-[225px] h-[21px] bg-white border-t border-r border-[#9aa0aa] rounded-tr-[2px] flex items-center pl-[10px] -mb-px relative">
            <svg width="18" height="18" viewBox="0 0 18 18" className="shrink-0">
              <circle cx="9" cy="9" r="7.500" fill="#2f7fc0" stroke="#1b4f80" />
              <path d="M4 6h10v2H4zM8 8h2v7H8z" fill="#fff" />
              <circle cx="14" cy="14" r="3" fill="#d0c040" />
            </svg>
            <span className="ml-[5px] text-[13px] font-bold text-[#222] whitespace-nowrap tracking-[-0.2px]">ﾒｲﾝﾃﾞｰﾀ：【復元】バインダー17</span>
          </div>
          <div className="absolute right-[25px] top-[7px] w-0 h-0 border-y-[4px] border-y-transparent border-l-[5px] border-l-[#aaa]" />
          <svg width="9" height="9" viewBox="0 0 9 9" className="absolute right-[4px] top-[7px]"><path d="M1 1l7 7M8 1L1 8" stroke="#666" strokeWidth="1.200" /></svg>
        </div>
        <div className="h-[5px] bg-[#e4e4e4] border-b border-[#8a8a8a]" />
      </div>
      {/* canvas + scrollbars */}
      <div className="ml-[2px] mr-[2px] flex h-[740px]">
        <div className="w-[4px] bg-[#a8a8a8] border-r border-[#e8e8e8] shrink-0" />
        <div className="w-[1599px] flex flex-col shrink-0">
          <div className="h-[727px] bg-black overflow-hidden"><CanvasDrawing /></div>
          <div className="h-[1px] bg-white" />
          <div className="h-[12px] flex items-center bg-[#c8c8c8]">
            <div className="w-[18px] h-full bg-[#efefef] flex items-center justify-center"><ChevronLeft size={12} strokeWidth={2.800} className="text-[#555]" /></div>
            <div className="flex-1" />
            <div className="w-[18px] h-full bg-[#efefef] flex items-center justify-center"><ChevronRight size={12} strokeWidth={2.800} className="text-[#555]" /></div>
          </div>
        </div>
        <div className="w-[17px] flex flex-col shrink-0 bg-[#efefef]">
          <div className="h-[18px] flex items-center justify-center"><ChevronUp size={12} strokeWidth={2.800} className="text-[#555]" /></div>
          <div className="h-[690px] bg-[#c8c8c8]" />
          <div className="h-[19px] flex items-center justify-center"><ChevronDown size={12} strokeWidth={2.800} className="text-[#555]" /></div>
          <div className="flex-1 bg-white" />
        </div>
      </div>
      <Dialog />
    </div>
  );
}
